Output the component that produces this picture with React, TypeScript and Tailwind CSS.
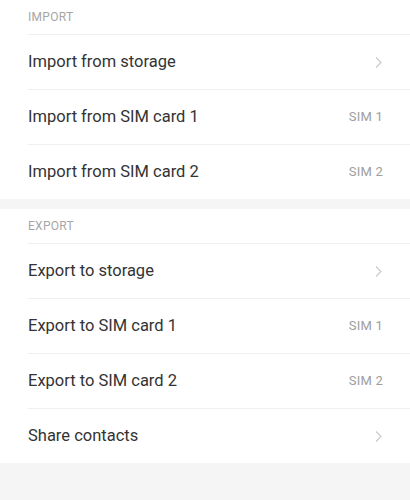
import { ReactNode } from 'react';

type Row = {
  label: string;
  trail: 'chevron' | string;
};

const importRows: Row[] = [
  { label: 'Import from storage', trail: 'chevron' },
  { label: 'Import from SIM card 1', trail: 'SIM 1' },
  { label: 'Import from SIM card 2', trail: 'SIM 2' },
];

const exportRows: Row[] = [
  { label: 'Export to storage', trail: 'chevron' },
  { label: 'Export to SIM card 1', trail: 'SIM 1' },
  { label: 'Export to SIM card 2', trail: 'SIM 2' },
  { label: 'Share contacts', trail: 'chevron' },
];

const Chevron = () => (
  <svg width="9" height="13" viewBox="0 0 9 13" fill="none">
    <path d="M2 1.5 L7 6.5 L2 11.5" stroke="#cacaca" strokeWidth="1.2" />
  </svg>
);

const Section = ({ title, children }: { title: string; children: ReactNode }) => (
  <div className="bg-white pl-[28px]">
    <div className="h-[34px] flex items-center text-[12px] text-[#a6a6a6] tracking-[0.3px]">
      {title}
    </div>
    {children}
  </div>
);

const ListRow = ({ row }: { row: Row }) => (
  <div className="h-[55px] border-t border-[#efefef] flex items-center justify-between pr-[27px]">
    <span className="text-[16.5px] text-[#333333]">{row.label}</span>
    {row.trail === 'chevron' ? (
      <Chevron />
    ) : (
      <span className="text-[13px] text-[#9e9e9e] tracking-[0.2px]">{row.trail}</span>
    )}
  </div>
);

export default function App() {
  return (
    <div className="min-h-[500px] bg-[#f5f5f5] font-['Roboto',sans-serif]">
      <Section title="IMPORT">
        {importRows.map((row) => (
          <ListRow key={row.label} row={row} />
        ))}
      </Section>
      <div className="h-[10px]" />
      <Section title="EXPORT">
        {exportRows.map((row) => (
          <ListRow key={row.label} row={row} />
        ))}
      </Section>
    </div>
  );
}
